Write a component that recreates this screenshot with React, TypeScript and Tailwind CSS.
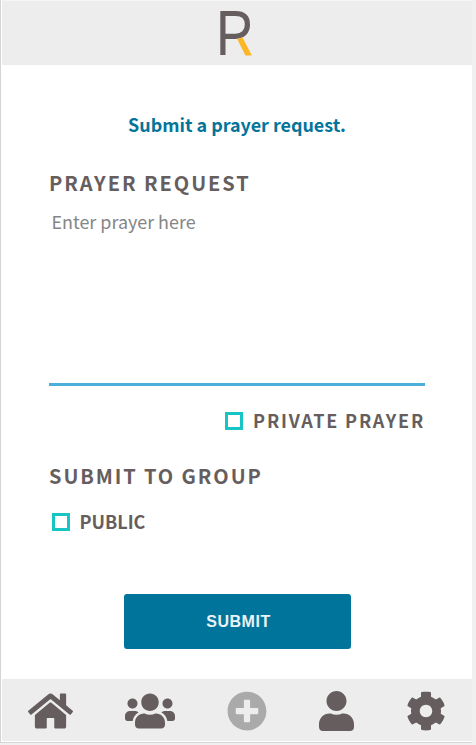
import { FaCog, FaPlusCircle, FaUser, FaUsers } from "react-icons/fa";

function Logo() {
  return (
    <svg width="34" height="46" viewBox="0 0 34 46" aria-label="R">
      <path
        d="M2.9 45V3.5H15.5C23.8 3.5 27.4 7.5 27.4 14.5C27.4 22 22.8 26.3 15.5 26.3H2.9"
        fill="none"
        stroke="#665e5e"
        strokeWidth="5.2"
      />
      <path d="M17.2 29L22.4 27.2L31.9 45.5H25.4Z" fill="#fbb725" />
    </svg>
  );
}

function HomeIcon() {
  return (
    <svg viewBox="0 0 576 512" className="h-[40px] w-[45px]" fill="currentColor">
      <path d="M488 312.7V456c0 13.3-10.7 24-24 24H348c-6.6 0-12-5.4-12-12V356c0-6.6-5.4-12-12-12h-72c-6.6 0-12 5.4-12 12v112c0 6.6-5.4 12-12 12H112c-13.3 0-24-10.7-24-24V312.7c0-3.6 1.6-7 4.4-9.3l188-154.8c4.4-3.6 10.8-3.6 15.3 0l188 154.8c2.7 2.3 4.3 5.7 4.3 9.3z" />
      <path d="M571.6 251.8L488 182.9V44.4c0-6.6-5.4-12-12-12h-56c-6.6 0-12 5.4-12 12V117l-89.5-73.7c-17.7-14.6-43.3-14.6-61 0L4.4 251.8c-5.1 4.2-5.8 11.8-1.6 16.9l25.5 31c4.2 5.1 11.8 5.8 16.9 1.6l235.2-193.7c4.4-3.6 10.8-3.6 15.3 0l235.2 193.7c5.1 4.2 12.7 3.5 16.9-1.6l25.5-31c4.2-5.2 3.4-12.7-1.7-16.9z" />
    </svg>
  );
}

function CheckBox({ label, className }: { label: string; className: string }) {
  return (
    <label className={`flex items-center font-bold ${className}`}>
      <span className="size-[18px] shrink-0 border-3 border-[#18c5c5] bg-white" />
      <span className="pb-[2px]">{label}</span>
    </label>
  );
}

export default function App() {
  return (
    <div className="h-[745px] w-[476px] bg-[#f0f0f0] pr-[4px] font-['Noto_Sans_CJK_SC',sans-serif] text-[#665e5e]">
      <div className="flex h-[743px] flex-col border-b border-l border-[#d5d5d5] bg-white pb-px pl-px">
        <header className="flex h-[65px] shrink-0 justify-center border-t border-[#f5f5f5] bg-[#ededed] pt-[9px]">
          <Logo />
        </header>
        <main className="flex grow flex-col px-[47px] pt-[46px]">
          <h1 className="text-center text-[17.92px] leading-[26px] font-bold text-[#03749a]">
            Submit a prayer request.
          </h1>
          <h2 className="mt-[31px] text-[20px] leading-[30px] font-bold tracking-[1.95px]">
            PRAYER REQUEST
          </h2>
          <textarea
            placeholder="Enter prayer here"
            className="mt-[7px] h-[181px] resize-none border-b-3 border-[#4bafda] px-[2.5px] pt-[3px] text-[17.92px] leading-[26px] outline-none placeholder:text-[#858585]"
          />
          <CheckBox
            label="PRIVATE PRAYER"
            className="mt-[22px] h-[26px] justify-end gap-[10px] text-[18px] leading-[26px] tracking-[1.8px]"
          />
          <h2 className="mt-[27px] text-[20px] leading-[30px] font-bold tracking-[1.9px]">
            SUBMIT TO GROUP
          </h2>
          <CheckBox
            label="PUBLIC"
            className="mt-[18px] ml-[3px] h-[26px] gap-[9.5px] text-[18px] leading-[26px]"
          />
          <button className="mt-[59px] ml-[75px] h-[55px] w-[227px] rounded-[3px] bg-[#00749b] pl-[2px] font-['Liberation_Sans',sans-serif] text-[16px] font-bold tracking-[0.5px] text-[#eaf3f7]">
            SUBMIT
          </button>
        </main>
        <nav className="flex h-[62px] shrink-0 items-center justify-between bg-[#ededed] pt-[2px] pr-[26px] pl-[26px]">
          <HomeIcon />
          <FaUsers className="h-[40px] w-[50px]" />
          <FaPlusCircle className="size-[40px] text-[#aaaaaa]" />
          <FaUser className="h-[40px] w-[35px]" />
          <FaCog className="size-[40px]" />
        </nav>
      </div>
    </div>
  );
}
